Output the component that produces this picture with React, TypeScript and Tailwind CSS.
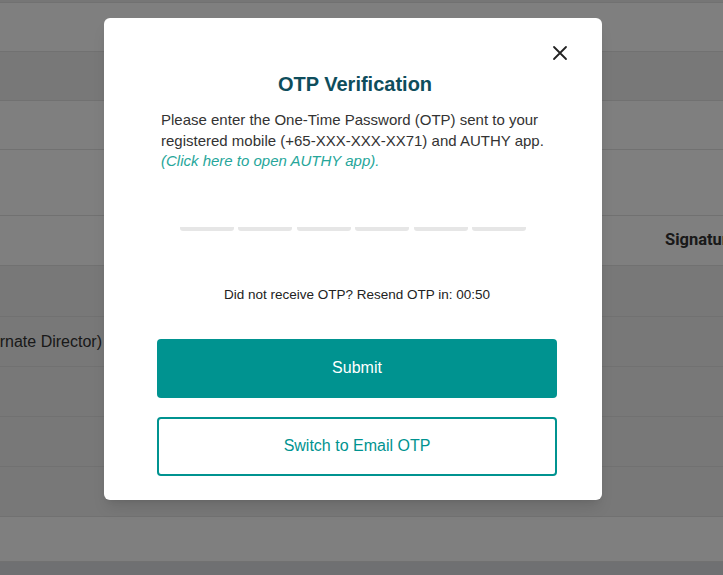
import { useState } from 'react'

const ROWS = [
  { h: 'h-[3px]', bg: 'bg-[#ececec]' },
  { h: 'h-[49px]', bg: 'bg-white' },
  { h: 'h-[49px]', bg: 'bg-[#f0f0f0]' },
  { h: 'h-[49px]', bg: 'bg-white' },
  { h: 'h-[66px]', bg: 'bg-white' },
  { h: 'h-[50px]', bg: 'bg-white', head: true },
  { h: 'h-[51px]', bg: 'bg-[#f0f0f0]' },
  { h: 'h-[50px]', bg: 'bg-[#f0f0f0]', role: true },
  { h: 'h-[50px]', bg: 'bg-[#f0f0f0]' },
  { h: 'h-[50px]', bg: 'bg-[#f0f0f0]' },
  { h: 'h-[50px]', bg: 'bg-[#f0f0f0]' },
  { h: 'h-[45px]', bg: 'bg-white' },
]

export default function App() {
  const [otp, setOtp] = useState(['', '', '', '', '', ''])

  return (
    <div className="relative w-[723px] h-[575px] overflow-hidden bg-[#dfe0e4] font-['Liberation_Sans',Arial,sans-serif]">
      {/* table behind the overlay */}
      <div className="flex flex-col">
        {ROWS.map((r, i) => (
          <div key={i} className={`${r.h} ${r.bg} flex items-center border-b border-[#e2e2e2] shrink-0 overflow-hidden`}>
            {r.head && (
              <span className="ml-[665px] text-[16.5px] font-bold text-[#333] whitespace-nowrap font-['Roboto',sans-serif]">Signature</span>
            )}
            {r.role && (
              <div className="w-[102px] overflow-hidden flex justify-end whitespace-nowrap text-[16px] text-[#333]">
                Director (Alternate Director)
              </div>
            )}
          </div>
        ))}
      </div>

      {/* overlay */}
      <div className="absolute inset-0 bg-black/50" />

      {/* modal */}
      <div className="absolute left-[104px] top-[18px] w-[498px] h-[482px] bg-white rounded-[6px] shadow-lg">
        <button className="absolute left-[448px] top-[27px] w-[16px] h-[16px] flex items-center justify-center">
          <svg width="16" height="16" viewBox="0 0 16 16">
            <path d="M2 2 L14 14 M14 2 L2 14" stroke="#222" strokeWidth="1.8" strokeLinecap="round" />
          </svg>
        </button>

        <div className="ml-[53px] w-[400px] pt-[54px]">
          <h2 className="text-center text-[20px] leading-[24px] font-bold text-[#0e4d5c] pr-1">OTP Verification</h2>

          <p className="mt-[14px] px-1 text-[15px] leading-[20.5px] text-[#333]">
            Please enter the One-Time Password (OTP) sent to your registered mobile (+65-XXX-XXX-XX71) and AUTHY app.
            <span className="block italic text-[#26a69a]">(Click here to open AUTHY app).</span>
          </p>

          <div className="mt-[19px] pr-[8px] flex justify-center gap-[4.4px]">
            {otp.map((v, i) => (
              <input
                key={i}
                value={v}
                maxLength={1}
                onChange={e => setOtp(otp.map((x, j) => (j === i ? e.target.value : x)))}
                className="w-[54px] h-[40px] border-b-4 border-[#e6e6e6] rounded-[3px] text-center text-[20px] outline-none"
              />
            ))}
          </div>

          <p className="mt-[56px] text-center text-[13.5px] leading-[16px] text-[#222]">
            Did not receive OTP? Resend OTP in: 00:50
          </p>

          <button className="mt-[36px] w-full h-[59px] rounded-[4px] bg-[#009390] text-white text-[16px]">
            Submit
          </button>
          <button className="mt-[19px] w-full h-[59px] rounded-[4px] border-2 border-[#009390] bg-white text-[#009390] text-[16px]">
            Switch to Email OTP
          </button>
        </div>
      </div>
    </div>
  )
}
